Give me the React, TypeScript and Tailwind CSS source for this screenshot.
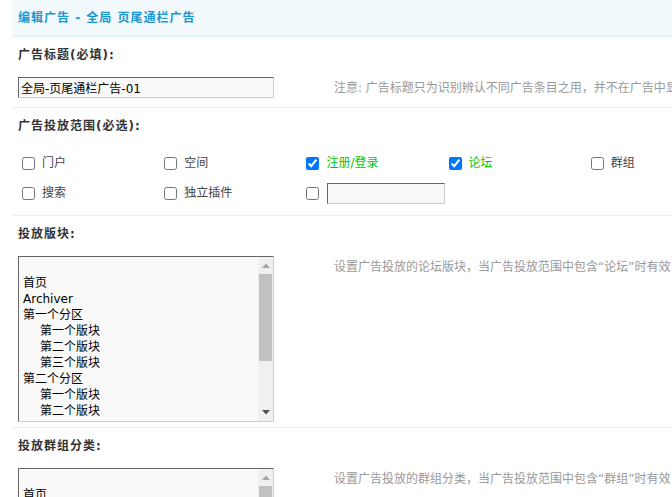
import React from "react";

const font = "font-['DejaVu_Sans','Noto_Sans_CJK_SC',sans-serif]";

function Label({ children }: { children: React.ReactNode }) {
  return (
    <div className="h-[36px] flex items-center pl-[5px] font-bold text-[#333] tracking-[1px] leading-[18px]">
      {children}
    </div>
  );
}

function Tip({ children }: { children: React.ReactNode }) {
  return <div className="pt-[6px] pl-[5px] leading-[18px] text-[#999] whitespace-nowrap">{children}</div>;
}

type Opt = { t: string; indent?: boolean };

function ListBox({ options }: { options: Opt[] }) {
  return (
    <div className="w-[256px] h-[166px] flex bg-[#f9f9f9] border border-t-[#666] border-l-[#666] border-r-[#ccc] border-b-[#ccc] overflow-hidden">
      <div className="flex-1 pt-[2px] pl-[4px] leading-[16px] text-black">
        <div className="h-[16px]"></div>
        {options.map((o, i) => (
          <div key={i} className={"h-[16px] whitespace-nowrap " + (o.indent ? "pl-[17px]" : "")}>
            {o.t}
          </div>
        ))}
      </div>
      <div className="w-[15px] bg-[#f0f0f0] flex flex-col">
        <div className="h-[17px] flex items-center justify-center">
          <svg width="8" height="5" viewBox="0 0 8 5">
            <path d="M0 5 L4 0.5 L8 5 Z" fill="#a3a3a3" />
          </svg>
        </div>
        <div className="h-[87px] mx-[1px] bg-[#c1c1c1]"></div>
        <div className="flex-1"></div>
        <div className="h-[17px] flex items-center justify-center">
          <svg width="8" height="5" viewBox="0 0 8 5">
            <path d="M0 0 L8 0 L4 4.5 Z" fill="#505050" />
          </svg>
        </div>
      </div>
    </div>
  );
}

function Check({ label, checked }: { label: string; checked?: boolean }) {
  return (
    <div className="h-[30px] flex items-center">
      <input type="checkbox" defaultChecked={checked} className="m-0 ml-[4px] w-[13px] h-[13px]" />
      <span className={"ml-[7px] leading-[18px] " + (checked ? "text-[#00c800]" : "text-[#444]")}>{label}</span>
    </div>
  );
}

export default function App() {
  const forums: Opt[] = [
    { t: "首页" },
    { t: "Archiver" },
    { t: "第一个分区" },
    { t: "第一个版块", indent: true },
    { t: "第二个版块", indent: true },
    { t: "第三个版块", indent: true },
    { t: "第二个分区" },
    { t: "第一个版块", indent: true },
    { t: "第二个版块", indent: true },
  ];
  const groups: Opt[] = [{ t: "首页" }];
  return (
    <div className={"w-[672px] h-[497px] overflow-hidden bg-white text-[12px] " + font}>
      <div className="ml-[13px] w-[760px]">
        <div className="h-[37px] bg-[#f2f9fd] border-b border-dotted border-[#cfe6f7] flex items-center pl-[5px] font-bold text-[#1a97cf] tracking-[1px] leading-[18px]">
          编辑广告 - 全局 页尾通栏广告
        </div>

        <Label>广告标题(必填):</Label>
        <div className="h-[35px] flex border-b border-dotted border-[#cfe6f7]">
          <div className="w-[316px] pl-[5px] pt-[4px]">
            <input
              type="text"
              defaultValue="全局-页尾通栏广告-01"
              className="w-[256px] h-[21px] px-[2px] bg-[#f9f9f9] text-black text-[12px] leading-[19px] border border-t-[#666] border-l-[#666] border-r-[#ccc] border-b-[#ccc] outline-none"
            />
          </div>
          <Tip>注意: 广告标题只为识别辨认不同广告条目之用，并不在广告中显示</Tip>
        </div>

        <Label>广告投放范围(必选):</Label>
        <div className="h-[72px] pt-[4px] border-b border-dotted border-[#cfe6f7]">
          <div className="ml-[5px] w-[711px] grid grid-cols-5">
            <Check label="门户" />
            <Check label="空间" />
            <Check label="注册/登录" checked />
            <Check label="论坛" checked />
            <Check label="群组" />
            <Check label="搜索" />
            <Check label="独立插件" />
            <div className="h-[30px] flex items-center">
              <input type="checkbox" className="m-0 ml-[4px] w-[13px] h-[13px]" />
              <input
                type="text"
                className="ml-[8px] w-[118px] h-[21px] bg-[#f9f9f9] border border-t-[#666] border-l-[#666] border-r-[#ccc] border-b-[#ccc] outline-none"
              />
            </div>
          </div>
        </div>

        <Label>投放版块:</Label>
        <div className="h-[176px] flex border-b border-dotted border-[#cfe6f7]">
          <div className="w-[316px] pl-[5px] pt-[4px]">
            <ListBox options={forums} />
          </div>
          <Tip>设置广告投放的论坛版块，当广告投放范围中包含“论坛”时有效</Tip>
        </div>

        <Label>投放群组分类:</Label>
        <div className="h-[176px] flex">
          <div className="w-[316px] pl-[5px] pt-[4px]">
            <ListBox options={groups} />
          </div>
          <Tip>设置广告投放的群组分类，当广告投放范围中包含“群组”时有效</Tip>
        </div>
      </div>
    </div>
  );
}
